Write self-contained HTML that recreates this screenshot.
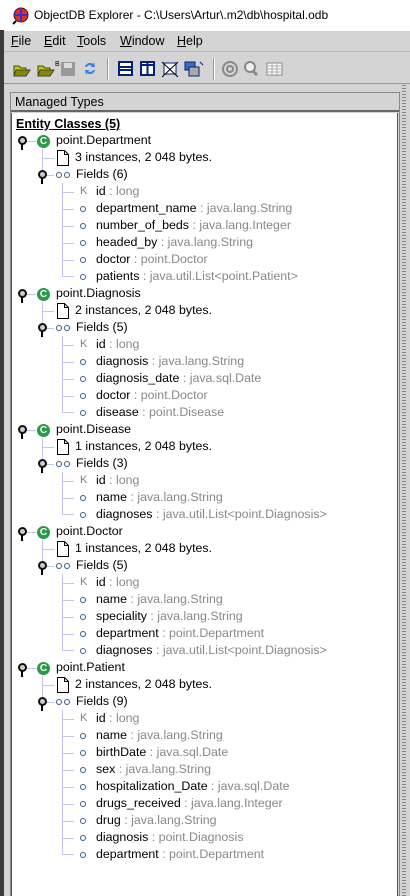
<!DOCTYPE html>
<html><head><meta charset="utf-8"><style>
*{margin:0;padding:0;box-sizing:border-box}
body{width:410px;height:896px;overflow:hidden;background:#d4d4d4;font-family:"Liberation Sans",Arial,sans-serif;font-size:12px;color:#000;position:relative}
.abs{position:absolute}
#title{left:0;top:0;width:410px;height:31px;background:#fff;font-size:12px}
#menu{top:31px;left:0;width:410px;height:21px;background:#d4d4d4;border-bottom:1px solid #b8b8b8}
#menu span{position:absolute;top:3px;font-size:12.5px}
#menu u{text-decoration:underline}
#tb{top:52px;left:0;width:410px;height:32px;background:#d4d4d4;border-bottom:1px solid #999}
.sep{position:absolute;top:6px;width:2px;height:22px;border-left:1px solid #999;border-right:1px solid #fff}
#left{left:0;top:30px;width:4px;height:866px;background:#3a3a3a}
#panel{left:10px;top:92px;width:390px;height:804px;border:1px solid #888;background:#d4d4d4}
#hdr{left:11px;top:93px;width:388px;height:19px;background:#d4d4d4;border-bottom:2px solid #666;font-size:12.5px;padding:2px 0 0 4px}
#tree{left:11px;top:113px;width:387px;height:783px;background:#fff;border-left:1px solid #555;border-right:1px solid #555}
#rs{left:402px;top:85px;width:4px;height:811px;background:repeating-linear-gradient(#888 0 1px,#d4d4d4 1px 3px)}
.r{position:absolute;height:17px;line-height:17px;font-size:12.4px;white-space:nowrap}
.t{color:#888}
.vl{position:absolute;width:1px;background:#c4c4ee}
.hl{position:absolute;height:1px;background:#c4c4ee}
.key{position:absolute;width:9px;height:9px;border-radius:50%;background:#111;}
.key::after{content:"";position:absolute;left:2px;top:2px;width:5px;height:5px;border-radius:50%;background:#ccc}
.stem{position:absolute;width:2px;height:6px;background:#000}
.cc{position:absolute;width:13px;height:13px;border-radius:50%;background:#2a9a48;color:#fff;font-weight:bold;font-size:10px;line-height:13px;text-align:center}
.doc{position:absolute;width:12px;height:16px}
.ring{position:absolute;width:6px;height:6px;border-radius:50%;border:1.5px solid #3a5a8a}
.k{position:absolute;color:#7080a0;font-size:11px}
</style></head><body>
<svg width="0" height="0" style="position:absolute"><symbol id="d" viewBox="0 0 12 16"><path d="M0.5 0.5h7l4 4v11h-11z M7.5 0.5v4h4" fill="#fff" stroke="#000"/></symbol></svg>
<div id="title" class="abs">
<svg class="abs" style="left:12px;top:7px" width="18" height="18" viewBox="0 0 18 18"><circle cx="9" cy="8" r="7" fill="#e03020" stroke="#600" /><path d="M9 1v14M2 8h14" stroke="#33c" stroke-width="2"/><path d="M4 14l-3 3" stroke="#000" stroke-width="2"/></svg>
<span class="abs" style="left:34px;top:8px">ObjectDB Explorer - C:\Users\Artur\.m2\db\hospital.odb</span></div>
<div id="menu" class="abs"><span style="left:11px"><u>F</u>ile</span><span style="left:44px"><u>E</u>dit</span><span style="left:77px"><u>T</u>ools</span><span style="left:120px"><u>W</u>indow</span><span style="left:177px"><u>H</u>elp</span></div>
<div id="tb" class="abs">
<svg class="abs" style="left:12px;top:8px" width="90" height="18"><path d="M2 6h5l2 2h5v8H2z" fill="#c8c800" stroke="#443"/><path d="M4 10h14l-4 6H2z" fill="#888800" stroke="#443"/><path d="M26 6h5l2 2h5v8H26z" fill="#c8c800" stroke="#443"/><path d="M28 10h14l-4 6H26z" fill="#888800" stroke="#443"/><text x="43" y="6" font-size="7" font-family="Liberation Sans">B</text><rect x="49" y="2" width="14" height="14" fill="#999"/><rect x="52" y="3" width="8" height="5" fill="#ddd"/><path d="M73 7a5 5 0 0 1 8-3l1-2 1 5h-5l2-1a3 3 0 0 0-5 1z M83 10a5 5 0 0 1-8 3l-1 2-1-5h5l-2 1a3 3 0 0 0 5-1z" fill="#3a80e0"/></svg>
<div class="sep" style="left:107px"></div>
<svg class="abs" style="left:118px;top:8px" width="95" height="18"><rect x="1" y="2" width="13" height="13" fill="#fff" stroke="#002080" stroke-width="2"/><path d="M1 7h13M1 10h13" stroke="#002080" stroke-width="2"/><rect x="23" y="2" width="13" height="13" fill="#fff" stroke="#002080" stroke-width="2"/><path d="M29.5 2v13M23 5h13" stroke="#002080" stroke-width="2"/><rect x="46" y="3" width="12" height="11" fill="#fff" stroke="#002080"/><path d="M44 2l16 15M60 2L44 17" stroke="#000"/><rect x="67" y="2" width="10" height="8" fill="#3a6ec0" stroke="#002080"/><rect x="71" y="7" width="10" height="9" fill="#aaa" stroke="#002080"/><path d="M82 2l3 3" stroke="#002080"/></svg>
<div class="sep" style="left:213px"></div>
<svg class="abs" style="left:222px;top:8px" width="65" height="18"><circle cx="8" cy="9" r="7" fill="none" stroke="#888" stroke-width="2"/><circle cx="8" cy="9" r="3" fill="none" stroke="#888" stroke-width="2"/><circle cx="28" cy="7" r="5" fill="#eee" stroke="#888" stroke-width="2"/><path d="M31 11l4 4" stroke="#888" stroke-width="3"/><rect x="45" y="3" width="15" height="12" fill="#fff" stroke="#888"/><path d="M45 6h15M45 9h15M45 12h15M50 3v12M55 3v12" stroke="#aaa"/></svg>
</div>
<div id="left" class="abs"></div>
<div id="rs" class="abs"></div>
<div id="panel" class="abs"></div>
<div id="hdr" class="abs">Managed Types</div>
<div id="tree" class="abs"></div>

<div class="r" style="left:16px;top:116px;font-weight:bold;text-decoration:underline;font-size:12.5px">Entity Classes (5)</div>

<div class="vl" style="left:42px;top:149px;height:26px"></div>
<div class="vl" style="left:62px;top:183px;height:93px"></div>
<div class="vl" style="left:42px;top:302px;height:26px"></div>
<div class="vl" style="left:62px;top:336px;height:76px"></div>
<div class="vl" style="left:42px;top:438px;height:26px"></div>
<div class="vl" style="left:62px;top:472px;height:42px"></div>
<div class="vl" style="left:42px;top:540px;height:26px"></div>
<div class="vl" style="left:62px;top:574px;height:76px"></div>
<div class="vl" style="left:42px;top:676px;height:26px"></div>
<div class="vl" style="left:62px;top:710px;height:144px"></div>

<div class="hl" style="left:26px;top:141px;width:10px"></div><div class="key" style="left:18px;top:136px"></div><div class="stem" style="left:21px;top:144px"></div><div class="cc" style="left:37px;top:135px">C</div><div class="r" style="left:56px;top:132px">point.Department</div>
<div class="hl" style="left:42px;top:158px;width:12px"></div><svg class="doc" style="left:57px;top:150px"><use href="#d"/></svg><div class="r" style="left:75px;top:149px">3 instances, 2 048 bytes.</div>
<div class="hl" style="left:46px;top:175px;width:8px"></div><div class="key" style="left:38px;top:170px"></div><div class="stem" style="left:41px;top:178px"></div><div class="ring" style="left:56px;top:172px"></div><div class="ring" style="left:64px;top:172px"></div><div class="r" style="left:76px;top:166px">Fields (6)</div>
<div class="hl" style="left:62px;top:192px;width:12px"></div><div class="k" style="left:80px;top:185px">K</div><div class="r" style="left:96px;top:183px">id <span class="t">: long</span></div>
<div class="hl" style="left:62px;top:209px;width:12px"></div><div class="ring" style="left:80px;top:206px"></div><div class="r" style="left:96px;top:200px">department_name <span class="t">: java.lang.String</span></div>
<div class="hl" style="left:62px;top:226px;width:12px"></div><div class="ring" style="left:80px;top:223px"></div><div class="r" style="left:96px;top:217px">number_of_beds <span class="t">: java.lang.Integer</span></div>
<div class="hl" style="left:62px;top:243px;width:12px"></div><div class="ring" style="left:80px;top:240px"></div><div class="r" style="left:96px;top:234px">headed_by <span class="t">: java.lang.String</span></div>
<div class="hl" style="left:62px;top:260px;width:12px"></div><div class="ring" style="left:80px;top:257px"></div><div class="r" style="left:96px;top:251px">doctor <span class="t">: point.Doctor</span></div>
<div class="hl" style="left:62px;top:276px;width:12px"></div><div class="ring" style="left:80px;top:274px"></div><div class="r" style="left:96px;top:268px">patients <span class="t">: java.util.List&lt;point.Patient&gt;</span></div>

<div class="hl" style="left:26px;top:294px;width:10px"></div><div class="key" style="left:18px;top:289px"></div><div class="stem" style="left:21px;top:297px"></div><div class="cc" style="left:37px;top:288px">C</div><div class="r" style="left:56px;top:285px">point.Diagnosis</div>
<div class="hl" style="left:42px;top:311px;width:12px"></div><svg class="doc" style="left:57px;top:303px"><use href="#d"/></svg><div class="r" style="left:75px;top:302px">2 instances, 2 048 bytes.</div>
<div class="hl" style="left:46px;top:328px;width:8px"></div><div class="key" style="left:38px;top:323px"></div><div class="stem" style="left:41px;top:331px"></div><div class="ring" style="left:56px;top:325px"></div><div class="ring" style="left:64px;top:325px"></div><div class="r" style="left:76px;top:319px">Fields (5)</div>
<div class="hl" style="left:62px;top:345px;width:12px"></div><div class="k" style="left:80px;top:338px">K</div><div class="r" style="left:96px;top:336px">id <span class="t">: long</span></div>
<div class="hl" style="left:62px;top:362px;width:12px"></div><div class="ring" style="left:80px;top:359px"></div><div class="r" style="left:96px;top:353px">diagnosis <span class="t">: java.lang.String</span></div>
<div class="hl" style="left:62px;top:379px;width:12px"></div><div class="ring" style="left:80px;top:376px"></div><div class="r" style="left:96px;top:370px">diagnosis_date <span class="t">: java.sql.Date</span></div>
<div class="hl" style="left:62px;top:396px;width:12px"></div><div class="ring" style="left:80px;top:393px"></div><div class="r" style="left:96px;top:387px">doctor <span class="t">: point.Doctor</span></div>
<div class="hl" style="left:62px;top:412px;width:12px"></div><div class="ring" style="left:80px;top:410px"></div><div class="r" style="left:96px;top:404px">disease <span class="t">: point.Disease</span></div>

<div class="hl" style="left:26px;top:430px;width:10px"></div><div class="key" style="left:18px;top:425px"></div><div class="stem" style="left:21px;top:433px"></div><div class="cc" style="left:37px;top:424px">C</div><div class="r" style="left:56px;top:421px">point.Disease</div>
<div class="hl" style="left:42px;top:447px;width:12px"></div><svg class="doc" style="left:57px;top:439px"><use href="#d"/></svg><div class="r" style="left:75px;top:438px">1 instances, 2 048 bytes.</div>
<div class="hl" style="left:46px;top:464px;width:8px"></div><div class="key" style="left:38px;top:459px"></div><div class="stem" style="left:41px;top:467px"></div><div class="ring" style="left:56px;top:461px"></div><div class="ring" style="left:64px;top:461px"></div><div class="r" style="left:76px;top:455px">Fields (3)</div>
<div class="hl" style="left:62px;top:481px;width:12px"></div><div class="k" style="left:80px;top:474px">K</div><div class="r" style="left:96px;top:472px">id <span class="t">: long</span></div>
<div class="hl" style="left:62px;top:498px;width:12px"></div><div class="ring" style="left:80px;top:495px"></div><div class="r" style="left:96px;top:489px">name <span class="t">: java.lang.String</span></div>
<div class="hl" style="left:62px;top:514px;width:12px"></div><div class="ring" style="left:80px;top:512px"></div><div class="r" style="left:96px;top:506px">diagnoses <span class="t">: java.util.List&lt;point.Diagnosis&gt;</span></div>

<div class="hl" style="left:26px;top:532px;width:10px"></div><div class="key" style="left:18px;top:527px"></div><div class="stem" style="left:21px;top:535px"></div><div class="cc" style="left:37px;top:526px">C</div><div class="r" style="left:56px;top:523px">point.Doctor</div>
<div class="hl" style="left:42px;top:549px;width:12px"></div><svg class="doc" style="left:57px;top:541px"><use href="#d"/></svg><div class="r" style="left:75px;top:540px">1 instances, 2 048 bytes.</div>
<div class="hl" style="left:46px;top:566px;width:8px"></div><div class="key" style="left:38px;top:561px"></div><div class="stem" style="left:41px;top:569px"></div><div class="ring" style="left:56px;top:563px"></div><div class="ring" style="left:64px;top:563px"></div><div class="r" style="left:76px;top:557px">Fields (5)</div>
<div class="hl" style="left:62px;top:583px;width:12px"></div><div class="k" style="left:80px;top:576px">K</div><div class="r" style="left:96px;top:574px">id <span class="t">: long</span></div>
<div class="hl" style="left:62px;top:600px;width:12px"></div><div class="ring" style="left:80px;top:597px"></div><div class="r" style="left:96px;top:591px">name <span class="t">: java.lang.String</span></div>
<div class="hl" style="left:62px;top:617px;width:12px"></div><div class="ring" style="left:80px;top:614px"></div><div class="r" style="left:96px;top:608px">speciality <span class="t">: java.lang.String</span></div>
<div class="hl" style="left:62px;top:634px;width:12px"></div><div class="ring" style="left:80px;top:631px"></div><div class="r" style="left:96px;top:625px">department <span class="t">: point.Department</span></div>
<div class="hl" style="left:62px;top:650px;width:12px"></div><div class="ring" style="left:80px;top:648px"></div><div class="r" style="left:96px;top:642px">diagnoses <span class="t">: java.util.List&lt;point.Diagnosis&gt;</span></div>

<div class="hl" style="left:26px;top:668px;width:10px"></div><div class="key" style="left:18px;top:663px"></div><div class="stem" style="left:21px;top:671px"></div><div class="cc" style="left:37px;top:662px">C</div><div class="r" style="left:56px;top:659px">point.Patient</div>
<div class="hl" style="left:42px;top:685px;width:12px"></div><svg class="doc" style="left:57px;top:677px"><use href="#d"/></svg><div class="r" style="left:75px;top:676px">2 instances, 2 048 bytes.</div>
<div class="hl" style="left:46px;top:702px;width:8px"></div><div class="key" style="left:38px;top:697px"></div><div class="stem" style="left:41px;top:705px"></div><div class="ring" style="left:56px;top:699px"></div><div class="ring" style="left:64px;top:699px"></div><div class="r" style="left:76px;top:693px">Fields (9)</div>
<div class="hl" style="left:62px;top:719px;width:12px"></div><div class="k" style="left:80px;top:712px">K</div><div class="r" style="left:96px;top:710px">id <span class="t">: long</span></div>
<div class="hl" style="left:62px;top:736px;width:12px"></div><div class="ring" style="left:80px;top:733px"></div><div class="r" style="left:96px;top:727px">name <span class="t">: java.lang.String</span></div>
<div class="hl" style="left:62px;top:753px;width:12px"></div><div class="ring" style="left:80px;top:750px"></div><div class="r" style="left:96px;top:744px">birthDate <span class="t">: java.sql.Date</span></div>
<div class="hl" style="left:62px;top:770px;width:12px"></div><div class="ring" style="left:80px;top:767px"></div><div class="r" style="left:96px;top:761px">sex <span class="t">: java.lang.String</span></div>
<div class="hl" style="left:62px;top:787px;width:12px"></div><div class="ring" style="left:80px;top:784px"></div><div class="r" style="left:96px;top:778px">hospitalization_Date <span class="t">: java.sql.Date</span></div>
<div class="hl" style="left:62px;top:804px;width:12px"></div><div class="ring" style="left:80px;top:801px"></div><div class="r" style="left:96px;top:795px">drugs_received <span class="t">: java.lang.Integer</span></div>
<div class="hl" style="left:62px;top:821px;width:12px"></div><div class="ring" style="left:80px;top:818px"></div><div class="r" style="left:96px;top:812px">drug <span class="t">: java.lang.String</span></div>
<div class="hl" style="left:62px;top:838px;width:12px"></div><div class="ring" style="left:80px;top:835px"></div><div class="r" style="left:96px;top:829px">diagnosis <span class="t">: point.Diagnosis</span></div>
<div class="hl" style="left:62px;top:854px;width:12px"></div><div class="ring" style="left:80px;top:852px"></div><div class="r" style="left:96px;top:846px">department <span class="t">: point.Department</span></div>
</body></html>
